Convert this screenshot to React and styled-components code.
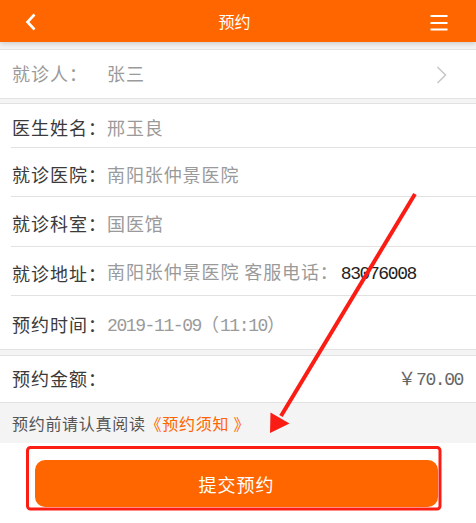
import styled, { createGlobalStyle } from "styled-components";

const GlobalStyle = createGlobalStyle`
  body {
    margin: 0;
    background: #fff;
    font-family: "Noto Sans CJK SC", "Noto Sans", sans-serif;
  }
`;

const ORANGE = "#ff6600";
const LINE = "#e2e2e2";

export default function App() {
  return (
    <Page>
      <GlobalStyle />
      <Header>
        <HeadSide>
          <svg width="12" height="18" viewBox="0 0 12 18">
            <path d="M9.5 1.5 L2.5 9 L9.5 16.5" fill="none" stroke="#fff" strokeWidth="2.6" />
          </svg>
        </HeadSide>
        <Title>预约</Title>
        <HeadSide className="right">
          <svg width="18" height="16" viewBox="0 0 18 16">
            <rect x="0.5" y="0" width="17" height="2" fill="#fff" />
            <rect x="0.5" y="7" width="17" height="2" fill="#fff" />
            <rect x="0.5" y="13.5" width="17" height="2" fill="#fff" />
          </svg>
        </HeadSide>
      </Header>

      <Body>
        <Card $gap={4}>
          <PatientRow>
            <Label $muted>就诊人：</Label>
            <Value>张三</Value>
            <Chevron width="12" height="18" viewBox="0 0 12 18">
              <path d="M1.5 1 L9.5 9 L1.5 17" fill="none" stroke="#c8c8c8" strokeWidth="1.6" />
            </Chevron>
          </PatientRow>
        </Card>

        <Card $gap={5}>
          <InfoRow $h={43}>
            <Label>医生姓名：</Label>
            <Value>邢玉良</Value>
          </InfoRow>
          <InfoRow $h={49}>
            <Label>就诊医院：</Label>
            <Value>南阳张仲景医院</Value>
          </InfoRow>
          <InfoRow $h={50}>
            <Label>就诊科室：</Label>
            <Value>国医馆</Value>
          </InfoRow>
          <InfoRow $h={49}>
            <Label>就诊地址：</Label>
            <Value>
              南阳张仲景医院 客服电话：<Phone>83076008</Phone>
            </Value>
          </InfoRow>
          <InfoRow $h={54}>
            <Label>预约时间：</Label>
            <Value>
              <Num>2019-11-09</Num>（<Num>11:10</Num>）
            </Value>
          </InfoRow>
        </Card>

        <Card>
          <AmountRow>
            <Label>预约金额：</Label>
            <Amount>
              ￥<Num>70.00</Num>
            </Amount>
          </AmountRow>
        </Card>

        <Notice>
          预约前请认真阅读<NoticeLink>《预约须知 》</NoticeLink>
        </Notice>
      </Body>

      <Footer>
        <SubmitButton>提交预约</SubmitButton>
      </Footer>

      <Annotation width="476" height="523" viewBox="0 0 476 523">
        <rect x="27.5" y="447.5" width="412.5" height="61.5" rx="3" fill="none" stroke="#fb1c14" strokeWidth="3" />
        <line x1="415" y1="194" x2="281" y2="416" stroke="#fb1c14" strokeWidth="4" />
        <polygon points="270,433 270.5,412.5 289.5,423.5" fill="#fb1c14" />
      </Annotation>
    </Page>
  );
}

const Page = styled.div`
  position: relative;
  width: 476px;
  min-height: 523px;
  background: #fff;
`;

const Header = styled.header`
  position: relative;
  z-index: 1;
  height: 42px;
  background: ${ORANGE};
  display: grid;
  grid-template-columns: 1fr auto 1fr;
  align-items: center;
  padding: 0 28px 0 25px;
  box-shadow: 0 2px 5px rgba(0, 0, 0, 0.16);
`;

const HeadSide = styled.div`
  display: flex;
  align-items: center;
  padding-top: 1px;

  &.right {
    justify-content: flex-end;
    padding-top: 3px;
  }
`;

const Title = styled.h1`
  margin: 0 0 0 -4px;
  font-size: 16px;
  font-weight: normal;
  color: #fff;
  line-height: 1;
`;

const Body = styled.div`
  background: #f4f4f4;
  padding-top: 7px;
`;

const Card = styled.section`
  background: #fff;
  border-top: 1px solid ${LINE};
  border-bottom: 1px solid ${LINE};
  margin-bottom: ${(p) => p.$gap || 0}px;
`;

const PatientRow = styled.div`
  height: 48px;
  display: flex;
  align-items: center;
  padding: 0 28px 0 12px;
`;

const InfoRow = styled.div`
  height: ${(p) => p.$h}px;
  box-sizing: border-box;
  display: flex;
  align-items: center;
  margin-left: 11px;
  padding: 5px 0 0 1px;

  & + & {
    border-top: 1px solid ${LINE};
  }
`;

const AmountRow = styled.div`
  height: 46px;
  display: flex;
  align-items: center;
  justify-content: space-between;
  padding: 0 13px 0 12px;
`;

const Label = styled.span`
  width: 95px;
  flex-shrink: 0;
  font-size: 18px;
  letter-spacing: 1px;
  line-height: 1.2;
  color: ${(p) => (p.$muted ? "#9a9a9a" : "#3a3a3a")};
  white-space: nowrap;
`;

const Value = styled.span`
  flex: 1;
  font-size: 18px;
  letter-spacing: 0.9px;
  line-height: 1.2;
  color: #9a9a9a;
  white-space: nowrap;
`;

const Num = styled.span`
  font-family: "Liberation Mono", monospace;
  font-size: 18px;
  letter-spacing: -1.4px;
`;

const Phone = styled(Num)`
  color: #222;
  margin-left: 2px;
`;

const Chevron = styled.svg`
  flex-shrink: 0;
  margin-top: 2px;
`;

const Amount = styled.span`
  font-size: 18px;
  line-height: 1.2;
  color: #666;
`;

const Notice = styled.div`
  height: 40px;
  display: flex;
  align-items: center;
  padding-left: 12px;
  font-size: 16px;
  letter-spacing: 0.7px;
  color: #555;
`;

const NoticeLink = styled.span`
  color: ${ORANGE};
`;

const Footer = styled.div`
  padding: 17px 38px 16px 35px;
`;

const SubmitButton = styled.button`
  display: block;
  width: 100%;
  height: 47px;
  border: 0;
  border-radius: 10px;
  background: ${ORANGE};
  color: #fff;
  font-family: "Noto Sans CJK SC", sans-serif;
  font-size: 18px;
  letter-spacing: 1px;
`;

const Annotation = styled.svg`
  position: absolute;
  top: 0;
  left: 0;
  pointer-events: none;
  z-index: 2;
`;
